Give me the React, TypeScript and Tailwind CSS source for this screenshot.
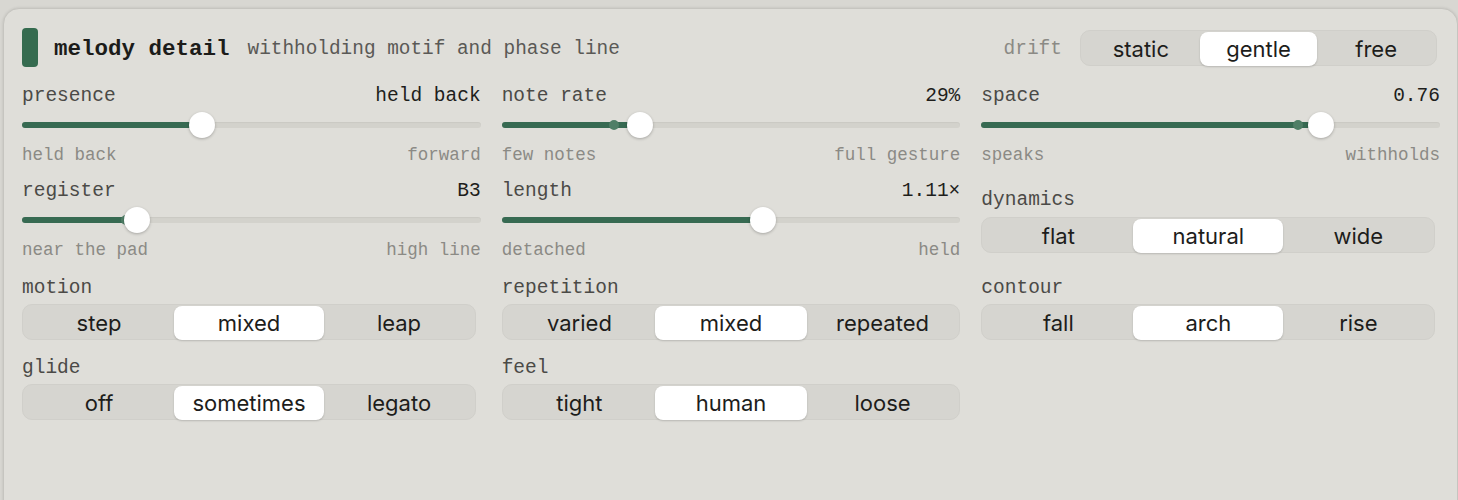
const mono = { fontFamily: '"Liberation Mono", "DejaVu Sans Mono", monospace' };

type SliderProps = {
  label: string;
  value: string;
  pos: number;
  marker?: number;
  low: string;
  high: string;
};

// thumb is 26px wide and travels inside the track
const at = (p: number) => `calc(13px + (100% - 26px) * ${p})`;

function Slider({ label, value, pos, marker, low, high }: SliderProps) {
  return (
    <div className="flex flex-col">
      <div className="flex h-6 items-center justify-between pt-[6px] text-[19.5px]">
        <span className="text-[#4b4a47]">{label}</span>
        <span className="font-medium text-[#1e1e1c]">{value}</span>
      </div>
      <div className="relative mt-[6px] h-[26px]">
        <div className="absolute inset-x-0 top-[10px] h-[6px] rounded-full bg-[#d3d2cc] shadow-[inset_0_1px_1px_rgba(0,0,0,0.04)]" />
        <div
          className="absolute left-0 top-[10px] h-[6px] rounded-full bg-[#376a52]"
          style={{ width: at(pos) }}
        />
        {marker !== undefined && (
          <div
            className="absolute top-[8px] h-[10px] w-[10px] -translate-x-1/2 rounded-full bg-[#4f7e66]"
            style={{ left: at(marker) }}
          />
        )}
        <div
          className="absolute top-0 h-[26px] w-[26px] -translate-x-1/2 rounded-full bg-white shadow-[0_1px_3px_rgba(0,0,0,0.25)]"
          style={{ left: at(pos) }}
        />
      </div>
      <div className="mt-[5px] flex h-[22px] items-center justify-between pt-[2px] text-[17.5px] text-[#8b8a85]">
        <span>{low}</span>
        <span>{high}</span>
      </div>
    </div>
  );
}

function Segmented({ options, active, className = "" }: { options: string[]; active: number; className?: string }) {
  return (
    <div
      className={`grid h-[36px] grid-cols-3 rounded-[10px] border border-[#d0cfca] bg-[#d6d5d0] p-px ${className}`}
      style={{ fontFamily: 'Inter, "Noto Sans", sans-serif' }}
    >
      {options.map((o, i) => (
        <div
          key={o}
          className={`flex items-center justify-center rounded-[8px] pt-px text-[22px] text-[#1d1d1b] ${
            i === active ? "bg-white shadow-[0_1px_2px_rgba(0,0,0,0.18)]" : ""
          }`}
        >
          {o}
        </div>
      ))}
    </div>
  );
}

function Choice({ label, options, active, width }: { label: string; options: string[]; active: number; width: string }) {
  return (
    <div className="flex flex-col pt-[2px]">
      <div className="flex h-6 items-center pt-[5px] text-[19.5px] text-[#4b4a47]">{label}</div>
      <Segmented options={options} active={active} className={`mt-[6px] ${width}`} />
    </div>
  );
}

export default function App() {
  return (
    <div className="h-[500px] overflow-hidden bg-[#d8d7d2] pt-[8px]" style={mono}>
      <div className="ml-[3px] h-[520px] w-[1455px] rounded-t-[16px] border border-[#c6c5c0] bg-[#dfded9] pl-[18px] pr-[17px] pt-[19px] shadow-[0_0_3px_rgba(0,0,0,0.12)]">
        {/* header */}
        <div className="flex h-[39px] items-center pr-[3px]">
          <div className="h-[39px] w-4 rounded-[4px] bg-[#356b4f]" />
          <h1 className="ml-4 pt-[4px] text-[22.5px] font-bold text-[#1c1c1a]">melody detail</h1>
          <span className="ml-[18px] pt-[4px] text-[19.4px] text-[#5a5956]">withholding motif and phase line</span>
          <div className="ml-auto flex items-center">
            <span className="pt-[4px] text-[19.5px] text-[#8b8a85]">drift</span>
            <Segmented options={["static", "gentle", "free"]} active={1} className="ml-[18px] w-[357px]" />
          </div>
        </div>

        {/* controls */}
        <div className="mt-[15px] grid grid-cols-3 items-center gap-x-[21px] gap-y-[12px]">
          <Slider label="presence" value="held back" pos={0.386} low="held back" high="forward" />
          <Slider label="note rate" value="29%" pos={0.29} marker={0.229} low="few notes" high="full gesture" />
          <Slider label="space" value="0.76" pos={0.755} marker={0.702} low="speaks" high="withholds" />

          <Slider label="register" value="B3" pos={0.235} marker={0.21} low="near the pad" high="high line" />
          <Slider label="length" value="1.11×" pos={0.575} low="detached" high="held" />
          <Choice label="dynamics" options={["flat", "natural", "wide"]} active={1} width="w-[454px]" />

          <Choice label="motion" options={["step", "mixed", "leap"]} active={1} width="w-[454px]" />
          <Choice label="repetition" options={["varied", "mixed", "repeated"]} active={1} width="w-full" />
          <Choice label="contour" options={["fall", "arch", "rise"]} active={1} width="w-[454px]" />

          <Choice label="glide" options={["off", "sometimes", "legato"]} active={1} width="w-[454px]" />
          <Choice label="feel" options={["tight", "human", "loose"]} active={1} width="w-full" />
          <div />
        </div>
      </div>
    </div>
  );
}
